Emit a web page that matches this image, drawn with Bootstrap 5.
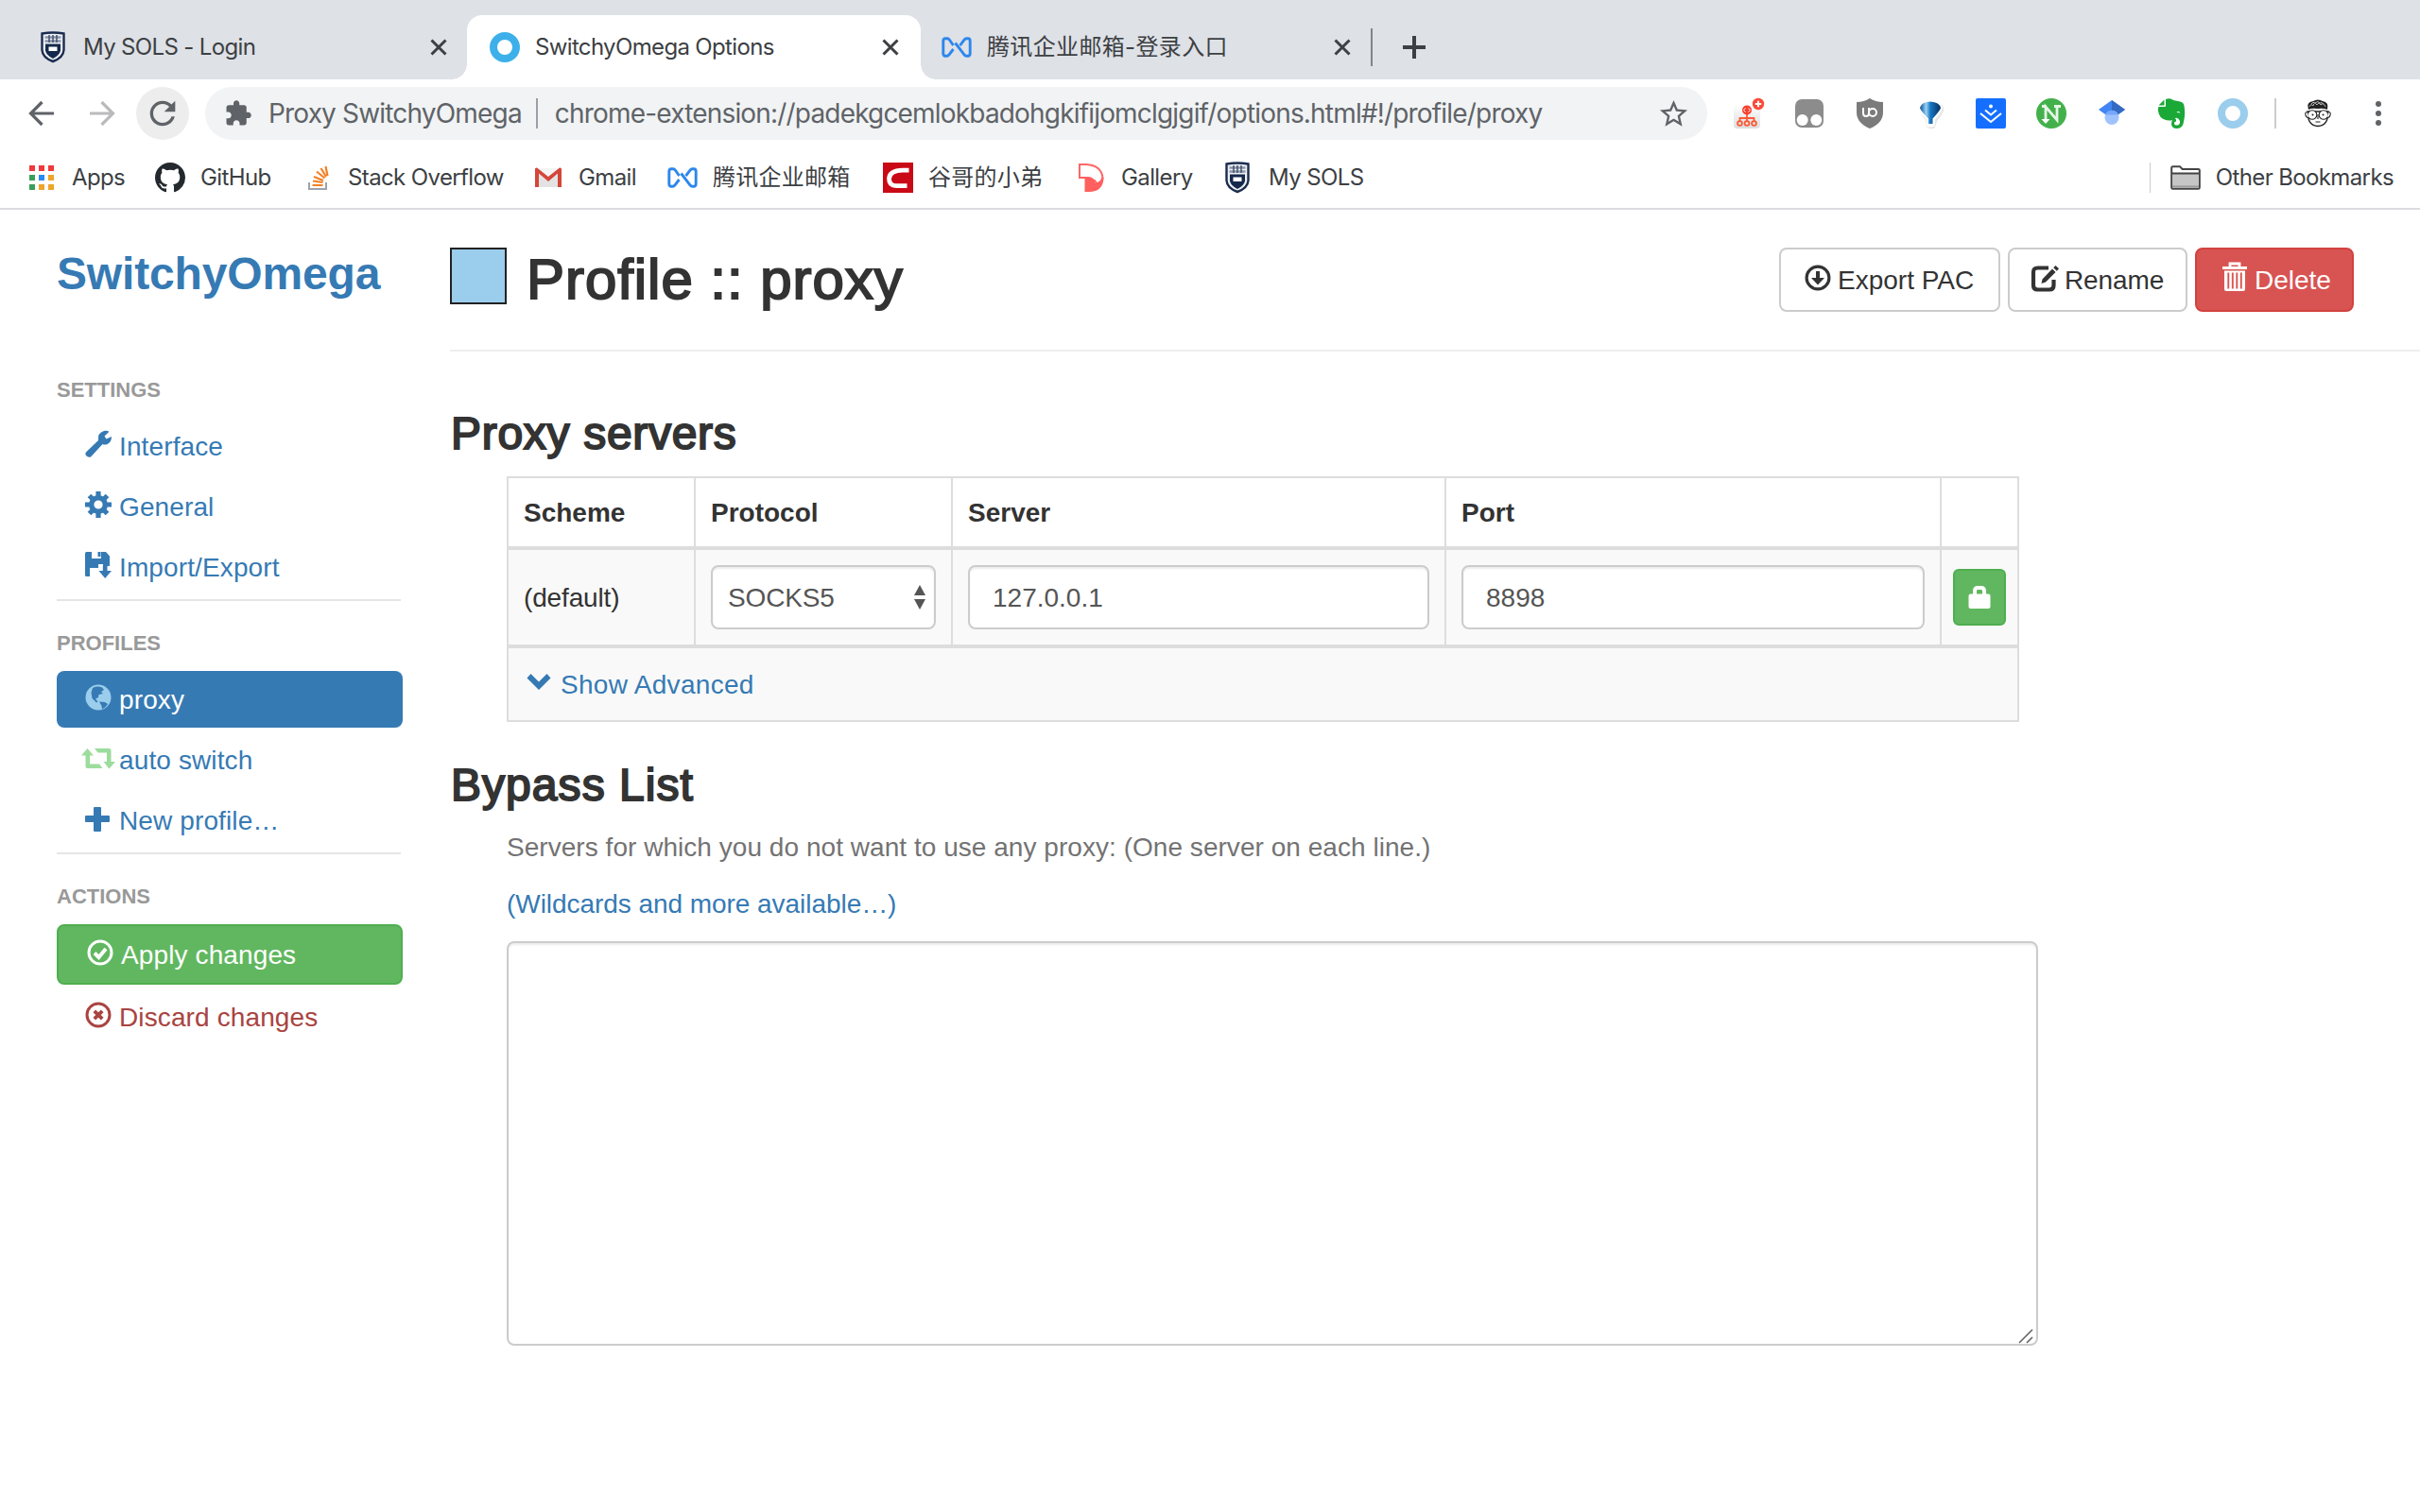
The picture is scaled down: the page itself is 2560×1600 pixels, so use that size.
<!DOCTYPE html>
<html lang="en">
<head>
<meta charset="utf-8">
<title>SwitchyOmega Options</title>
<link href="https://cdn.jsdelivr.net/npm/bootstrap@5.3.0/dist/css/bootstrap.min.css" rel="stylesheet">
<style>
:root{--link:#367ab4;--ui:Inter,"Noto Sans CJK SC",sans-serif}
html,body{overflow:hidden}
body{font-family:"Liberation Sans",Arial,sans-serif;font-size:28px;line-height:40px;color:#333;background:#fff;width:2560px;height:1600px}
svg{display:block;flex:none;overflow:visible}
a{text-decoration:none}

/* browser chrome */
.chrome-ui{font-family:var(--ui);color:#3c4043;height:222px;border-bottom:2px solid #dadce0}
.tabstrip{height:84px;background:#dee1e6;padding:16px 0 0 16px}
.btab{width:478px;height:68px;padding:0 21px 0 24px;font-size:24px;position:relative;letter-spacing:-.65px}
.btab .fav{width:32px;margin-right:16px}
.btab.current{width:480px;margin-right:-2px;padding-right:23px;background:#fff;border-radius:16px 16px 0 0}
.btab.current::before,.btab.current::after{content:"";position:absolute;bottom:0;width:16px;height:16px}
.btab.current::before{left:-16px;background:radial-gradient(circle at 0 0,transparent 15.5px,#fff 16px)}
.btab.current::after{right:-16px;background:radial-gradient(circle at 100% 0,transparent 15.5px,#fff 16px)}
.tabend{height:68px}
.tabsep{width:2px;height:40px;background:#80868b}
.plus{margin-left:32px}
.toolbar{height:72px;padding-left:24px}
.reload{width:56px;height:56px;border-radius:50%;background:#ededee;margin-left:16px}
.omnibox{width:1589px;height:56px;border-radius:28px;background:#f1f3f4;margin-left:17px;padding:0 18px 0 20px;font-size:28px;color:#5f6368;letter-spacing:-.82px}
.omnibox .bar{width:2px;height:32px;background:#9aa0a6;margin:0 18px 0 15px}
.omnibox .extname{margin-left:17px}
.exts{margin-left:28px;gap:32px;margin-right:28px}
.vline{width:2px;height:32px;background:#ccc}
.face{margin-left:28px}
.dots{margin-left:45px}
.bookmarks{height:64px;font-size:24px;padding-left:28px;letter-spacing:-.62px}
.btab .cjk{letter-spacing:.35px}
.cjk{letter-spacing:.25px}
.bm{gap:16px;height:32px;flex:none}
.bm .ic{width:32px}
.bookmarks .bm:nth-child(1){width:136px}
.bookmarks .bm:nth-child(2){width:156px}
.bookmarks .bm:nth-child(3){width:244px}
.bookmarks .bm:nth-child(4){width:142px}
.bookmarks .bm:nth-child(5){width:228px}
.bookmarks .bm:nth-child(6){width:204px}
.bookmarks .bm:nth-child(7){width:156px}
.bookmarks .bm:nth-child(8) svg{margin-left:2px}
.others{padding-right:28px}
.others .vline{width:1px;margin-right:21px}

/* options page */
.side{width:476px;padding:38px 50px 0 60px}
.logo{font-size:48px;line-height:60px;font-weight:700;color:var(--link);margin-bottom:77px;letter-spacing:-.15px}
.sect{font-size:22px;line-height:31px;font-weight:700;color:#999;margin-bottom:14px}
a.item{height:60px;line-height:61px;margin-bottom:4px;padding-left:30px;border-radius:8px;color:var(--link);gap:8px;letter-spacing:.12px}
.item svg{margin-top:14px}
a.item.on{background:var(--link);color:#fff}
a.item.apply{height:64px;background:#61b760;border:2px solid #4fae50;color:#fff}
a.item.discard{color:#a94442}
.line{height:2px;width:364px;background:#e5e5e5;margin-bottom:29px}
.head{height:150px;border-bottom:2px solid #eee;padding:40px 70px 0 0}
.swatch{width:60px;height:60px;border:2px solid #222;background:#9bcdec}
.med{-webkit-text-stroke:2px #333;font-weight:400;color:#333;margin:0}
.title{font-size:60px;line-height:70px;letter-spacing:.95px;margin-left:21px;margin-top:-1px}
.sub{font-size:48px;line-height:60px;letter-spacing:.7px;padding-left:1px}
.sub.first{margin-top:57px}
.sub.second{letter-spacing:1.05px}
.abtn{height:68px;border:2px solid #ccc;border-radius:8px;font-size:28px;line-height:65px;padding:0;color:#333;background:#fff;gap:7px;display:flex}
.abtn.exp{width:234px;padding-left:25px}
.abtn.ren{width:190px;padding-left:23px;letter-spacing:-.1px}
.abtn.del{width:168px;padding-left:26px;background:#d85452;border-color:#d2423f;color:#fff}
.abtn svg{margin-top:16px}
.abtn.ren svg{margin-top:17px}
.abtn.del svg{margin-top:13px}
.grid-wrap{width:1600px;margin:15px 0 37px 60px}
.proxies{table-layout:fixed;border-collapse:separate;border-spacing:0;width:1600px;--bs-table-bg:transparent;color:#333;margin:0}
.proxies .c1{width:198px}.proxies .c2{width:272px}.proxies .c3{width:522px}.proxies .c4{width:524px}.proxies .c5{width:84px}
.proxies>:not(caption)>*>*{border:0 solid #ddd;border-left-width:2px;border-top-width:2px;padding:0 16px;vertical-align:middle;box-shadow:none;color:#333;background:none}
.proxies>:not(caption)>*>*:last-child{border-right-width:2px}
.proxies>thead>tr>th{height:74px;font-weight:700;padding:2px 0 0 16px}
.proxies>tbody>tr>td{height:104px;border-top-width:4px;background:#f9f9f9}
.proxies>tbody>tr>td:first-child{padding:1px 0 0 16px;letter-spacing:-.15px}
.proxies>tfoot>tr>td{height:82px;border-top-width:4px;border-bottom-width:2px;background:#f9f9f9}
.proxies>tbody>tr>td:last-child{padding:0 12px}
.fld{height:68px;border:2px solid #ccc;border-radius:8px;font-size:28px;line-height:40px;color:#555;background:#fff;box-shadow:inset 0 2px 2px rgba(0,0,0,.075);padding:1px 24px 0}
select.fld{padding:1px 16px 0 16px;background-image:none;letter-spacing:-.15px}
.lock{width:56px;height:60px;border:2px solid #4fae50;background:#61b760;border-radius:6px;padding:12px 14px}
.carets{position:absolute;right:11px;top:21px}
a.adv{gap:10px;color:var(--link);letter-spacing:.3px;padding-top:1px}
.adv svg{margin:-7px 1px 0 4px}
.bypass{margin-left:60px;width:1620px}
.help{color:#737373;margin:16px 0 20px;letter-spacing:.04px}
.more{margin-bottom:19px}
a.more-link{color:var(--link);letter-spacing:-.05px}
textarea.fld{height:428px;resize:none}
.grip{position:absolute;right:5px;bottom:2px}
</style>
</head>
<body>
<header class="chrome-ui">
  <div class="tabstrip d-flex">
    <div class="btab d-flex align-items-center">
      <span class="fav d-flex"><svg width="30" height="32" viewBox="-3 0 30 32"><path d="M1.500 1.500Q13-.5 24.500 1.500V19Q24 27 13 31Q2 27 1.500 19Z" fill="#eef0f4" stroke="#1b2c4f" stroke-width="2.400"/><path d="M4.500 5.500h17M4.500 9.500h17" stroke="#8c97ab" stroke-width="2.400"/><path d="M9 3v8M13 3v8M17 3v8" stroke="#44516d" stroke-width="1.500"/><path d="M5 12.500h16v7q-1 5-8 8.500q-7-3.500-8-8.500z" fill="#14284b"/><path d="M8.500 15.500h9v4.500h-9z" fill="#fff"/></svg></span>
      <span>My SOLS - Login</span>
      <svg class="ms-auto" width="18" height="18" viewBox="0 0 18 18"><path d="M1.500 1.500l15 15M16.500 1.500l-15 15" stroke="#3c4043" stroke-width="3"/></svg>
    </div>
    <div class="btab current d-flex align-items-center">
      <span class="fav"><svg width="32" height="32"><circle cx="16" cy="16" r="12" fill="none" stroke="#3db0ea" stroke-width="8"/></svg></span>
      <span>SwitchyOmega Options</span>
      <svg class="ms-auto" width="18" height="18" viewBox="0 0 18 18"><path d="M1.500 1.500l15 15M16.500 1.500l-15 15" stroke="#3c4043" stroke-width="3"/></svg>
    </div>
    <div class="btab d-flex align-items-center">
      <span class="fav"><svg width="32" height="22" viewBox="0 0 32 22"><path d="M12.500 9L8.500 3.200Q7.500 1.800 6 1.800H4Q1.800 1.800 1.800 4.500V17.500Q1.800 20.200 4 20.200H5.500Q7 20.200 8 18.800L12.500 13M14.500 6.500L24 18.800Q25 20.200 26.500 20.200H28Q30.200 20.200 30.200 17.500V4.500Q30.200 1.800 28 1.800H26.500Q25 1.800 24 3.200L19.500 9.200" fill="none" stroke="#2d87ec" stroke-width="2.900"/></svg></span>
      <span class="cjk">腾讯企业邮箱-登录入口</span>
      <svg class="ms-auto" width="18" height="18" viewBox="0 0 18 18"><path d="M1.500 1.500l15 15M16.500 1.500l-15 15" stroke="#3c4043" stroke-width="3"/></svg>
    </div>
    <div class="tabend d-flex align-items-center"><span class="tabsep"></span>
      <svg class="plus" width="24" height="24"><path d="M12 0v24M0 12h24" stroke="#3c4043" stroke-width="4"/></svg></div>
  </div>
  <nav class="toolbar d-flex align-items-center">
    <svg width="40" height="40" viewBox="0 0 40 40"><path d="M33 20H9M20.500 8L8.500 20l12 12" fill="none" stroke="#5f6368" stroke-width="3.200"/></svg>
    <svg class="ms-4" width="40" height="40" viewBox="0 0 40 40"><path d="M7 20H31M19.500 8l12 12l-12 12" fill="none" stroke="#bababc" stroke-width="3.200"/></svg>
    <span class="reload d-flex align-items-center justify-content-center"><svg width="40" height="40" viewBox="0 0 24 24"><path fill="#5f6368" d="M17.650 6.350C16.200 4.900 14.210 4 12 4c-4.420 0-7.990 3.580-7.990 8s3.570 8 7.990 8c3.730 0 6.840-2.550 7.730-6h-2.080c-.82 2.330-3.040 4-5.650 4-3.310 0-6-2.690-6-6s2.690-6 6-6c1.660 0 3.140.69 4.220 1.780L13 11h7V4l-2.350 2.350z"/></svg></span>
    <div class="omnibox d-flex align-items-center">
      <svg width="30" height="30" viewBox="0 0 24 24"><path fill="#5f6368" d="M20.500 11H19V7c0-1.100-.9-2-2-2h-4V3.500C13 2.120 11.880 1 10.500 1S8 2.120 8 3.500V5H4c-1.100 0-1.990.9-1.990 2v3.800H3.500c1.490 0 2.700 1.210 2.700 2.700s-1.210 2.700-2.700 2.700H2V20c0 1.100.9 2 2 2h3.800v-1.500c0-1.490 1.210-2.700 2.700-2.700 1.490 0 2.700 1.210 2.700 2.700V22H17c1.100 0 2-.9 2-2v-4h1.500c1.380 0 2.500-1.120 2.500-2.500S21.880 11 20.500 11z"/></svg>
      <span class="extname">Proxy SwitchyOmega</span><span class="bar"></span><span>chrome-extension://padekgcemlokbadohgkifijomclgjgif/options.html#!/profile/proxy</span>
      <svg class="ms-auto" width="35" height="35" viewBox="0 0 24 24"><path fill="#5f6368" d="M22 9.240l-7.190-.62L12 2 9.190 8.630 2 9.240l5.460 4.730L5.820 21 12 17.270 18.180 21l-1.630-7.030L22 9.240zM12 15.400l-3.760 2.270 1-4.280-3.320-2.880 4.380-.38L12 6.100l1.710 4.040 4.380.38-3.320 2.880 1 4.280L12 15.400z"/></svg>
    </div>
    <div class="exts d-flex align-items-center">
      <svg width="32" height="32" viewBox="0 0 32 32"><defs><linearGradient id="gr" x2="0" y2="1"><stop stop-color="#fff"/><stop offset="1" stop-color="#ddd"/></linearGradient></defs><rect y="6" width="28" height="26" rx="4" fill="url(#gr)"/><g fill="none" stroke="#fb5a35" stroke-width="1.800"><path d="M14 16v8M6.500 25v-4h15v4"/><circle cx="6.500" cy="26.500" r="2.400"/><circle cx="14" cy="26.500" r="2.400"/><circle cx="21.500" cy="26.500" r="2.400"/></g><circle cx="14" cy="12.500" r="5" fill="#f9412f"/><path d="M12.500 10.500l-2 2 2 2M15.500 10.500l2 2-2 2" fill="none" stroke="#fff"/><circle cx="26" cy="6" r="6.200" fill="#fb4a38"/><path d="M26 2.800v6.400M22.800 6h6.400" stroke="#fff" stroke-width="2"/></svg>
      <svg width="32" height="32" viewBox="0 0 32 32"><rect x="1" y="1" width="30" height="30" rx="7" fill="#8c8c8c"/><circle cx="8.700" cy="23" r="6" fill="#fff"/><circle cx="23.300" cy="23" r="6" fill="#fff"/></svg>
      <svg width="32" height="32" viewBox="0 0 32 32"><path d="M16 0Q22 4 30 4V15Q30 26 16 32Q2 26 2 15V4Q10 4 16 0Z" fill="#7b7b7b"/><path d="M9 10v6q0 3 3 3t3-3v-6" fill="none" stroke="#fff" stroke-width="2"/><circle cx="19" cy="15" r="4" fill="none" stroke="#fff" stroke-width="2"/></svg>
      <svg width="32" height="32" viewBox="0 0 32 32"><defs><linearGradient id="bl"><stop stop-color="#0a4f94"/><stop offset=".3" stop-color="#9bd3f3"/><stop offset=".5" stop-color="#1877c4"/><stop offset="1" stop-color="#052f60"/></linearGradient></defs><path d="M5 12Q3 4 17 3Q32 5 30 13Q29 17 23 24L21 31Q17 34 12 30L11 23Q5 17 5 12Z" fill="#e6e6e6"/><path d="M3.500 11.500Q3 2.500 16 2Q29 2.500 28.500 11.500Q27 16 21 22.500V29Q16.500 32 12 29V22.500Q5 16 3.500 11.500Z" fill="#fff"/><path d="M5 10.500Q6 4 16 3.500Q26 4 27 10.500Q25 14.500 18.500 21.500V27H14V21.500Q7 14.500 5 10.500Z" fill="url(#bl)"/></svg>
      <svg width="32" height="32" viewBox="0 0 32 32"><rect width="32" height="32" rx="2" fill="#146fff"/><path d="M5 16l11 9l11-9M10 12.500l6 5l6-5" fill="none" stroke="#fff" stroke-width="2"/><circle cx="16" cy="8.500" r="2" fill="#fff"/></svg>
      <svg width="32" height="32" viewBox="0 0 32 32"><circle cx="16" cy="16" r="16" fill="#43b14b"/><path d="M10 24V9L22 23V8M6 8.500h5M19 8.500h7" fill="none" stroke="#e6f5e6" stroke-width="2.800"/><path d="M5.500 22h9L10 27z" fill="#fff"/></svg>
      <svg width="32" height="32" viewBox="0 0 32 32"><path d="M16 2L30 12L16 22L2 12Z" fill="#4285f4"/><path d="M16 2L30 12L16 22Z" fill="#356ac3"/><circle cx="16" cy="20.500" r="7.500" fill="#a0c3ff"/><path d="M9 17.500a7.500 7.500 0 0 1 14 0z" fill="#76a7fa"/></svg>
      <svg width="32" height="32" viewBox="0 0 32 32"><path d="M9 1Q14-1 17 2L24 3.500Q28 4 28.500 8Q30 17 28 25Q27 32 21 32Q15 32 15 27Q15 22 20 22V24.500Q18 24.500 18 26.500Q18 28.500 21 28.500Q24.500 28 24 24Q23 21 20 20.500Q18 24 13 23.500Q4 23 2 17Q0 12 1.500 9H8Q9 9 9 8Z" fill="#1aa837"/><path d="M1.500 7.500L7.500 1.500V7.500Z" fill="#1aa837"/><path d="M20.500 15q2-2 4 .5z" fill="#fff"/></svg>
      <svg width="32" height="32"><circle cx="16" cy="16" r="12" fill="none" stroke="#9bcdec" stroke-width="8"/></svg>
    </div>
    <span class="vline"></span>
    <svg class="face" width="32" height="32" viewBox="0 0 32 32"><path d="M5 14q0 15 11 15.500q11-.5 11-15.500z" fill="#fff" stroke="#222" stroke-width="1.300"/><path d="M6 12Q3 4 11 3Q16 0 21 3Q28 4 26 12Q22 10 16 11Q9 10 6 12Z" fill="#222"/><path d="M7 9q2-4 4-1q1-5 4-1q2-4 4 0q3-3 5 2M9 6q2-3 4-1q3-3 5 0q2-1 4 1" fill="none" stroke="#bbb"/><g fill="#fff" stroke="#222" stroke-width="1.100"><circle cx="10" cy="17.500" r="4.800"/><circle cx="22" cy="17.500" r="4.800"/><path d="M5 15q-3-1-2 3q1 3 3 2M27 15q3-1 2 3q-1 3-3 2M16 17v5M13.500 25h5"/></g><circle cx="10.500" cy="17.500" r="1" fill="#222"/><circle cx="21.500" cy="17.500" r="1" fill="#222"/></svg>
    <svg class="dots" width="6" height="26" viewBox="0 0 6 26"><g fill="#5f6368"><circle cx="3" cy="3" r="3"/><circle cx="3" cy="13" r="3"/><circle cx="3" cy="23" r="3"/></g></svg>
  </nav>
  <nav class="bookmarks d-flex align-items-center">
    <div class="bm d-flex align-items-center"><span class="ic"><svg width="32" height="26"><g fill="#f0393c"><path d="M3 0h6v6H3zM13 0h6v6h-6zM23 0h6v6h-6z"/></g><path d="M3 10h6v6H3zM3 20h6v6H3z" fill="#3a9e5b"/><path d="M13 10h6v6h-6z" fill="#2a8af5"/><path d="M13 20h6v6h-6z" fill="#eea52a"/><path d="M23 10h6v6h-6zM23 20h6v6h-6z" fill="#eea52a"/></svg></span><span>Apps</span></div>
    <div class="bm d-flex align-items-center"><span class="ic"><svg width="32" height="32" viewBox="0 0 16 16"><path fill="#24292e" d="M8 0C3.580 0 0 3.580 0 8c0 3.540 2.290 6.530 5.470 7.590.4.07.55-.17.55-.38 0-.19-.01-.82-.01-1.490-2.010.37-2.530-.49-2.690-.94-.09-.23-.48-.94-.82-1.130-.28-.15-.68-.52-.01-.53.63-.01 1.080.58 1.230.82.72 1.210 1.870.87 2.330.66.07-.52.28-.87.51-1.070-1.780-.2-3.640-.89-3.640-3.950 0-.87.31-1.590.82-2.150-.08-.2-.36-1.020.08-2.120 0 0 .67-.21 2.200.82.64-.18 1.320-.27 2-.27s1.360.09 2 .27c1.530-1.040 2.200-.82 2.200-.82.44 1.100.16 1.920.08 2.120.51.56.82 1.270.82 2.150 0 3.070-1.870 3.750-3.650 3.950.29.25.54.73.54 1.480 0 1.070-.01 1.930-.01 2.200 0 .21.15.46.55.38A8.010 8.010 0 0 0 16 8c0-4.420-3.580-8-8-8z"/></svg></span><span>GitHub</span></div>
    <div class="bm d-flex align-items-center"><span class="ic"><svg width="32" height="32" viewBox="0 0 32 32"><path d="M7 21v7h18v-7" fill="none" stroke="#9da3a9" stroke-width="2"/><path d="M10.500 24h11M11 19.500l10.500 1.500M12 15l10 4M15 9.500l8.500 7M19.500 6l5.500 9M24.500 4l2 10" stroke="#f48024" stroke-width="2.200"/></svg></span><span>Stack Overflow</span></div>
    <div class="bm d-flex align-items-center"><span class="ic"><svg width="32" height="22" viewBox="0 0 32 22"><path d="M3 1h26v20H3z" fill="#e3e3e3"/><path d="M4 1l12 9.500L28 1z" fill="#f4f4f4"/><path d="M2 21V2Q2 0 4 .5L16 10L28 .5Q30 0 30 2V21H26V6.500L16 15L6 6.500V21Z" fill="#d5453a"/></svg></span><span>Gmail</span></div>
    <div class="bm d-flex align-items-center"><span class="ic"><svg width="32" height="22" viewBox="0 0 32 22"><path d="M12.500 9L8.500 3.200Q7.500 1.800 6 1.800H4Q1.800 1.800 1.800 4.500V17.500Q1.800 20.200 4 20.200H5.500Q7 20.200 8 18.800L12.500 13M14.500 6.500L24 18.800Q25 20.200 26.500 20.200H28Q30.200 20.200 30.200 17.500V4.500Q30.200 1.800 28 1.800H26.500Q25 1.800 24 3.200L19.500 9.200" fill="none" stroke="#2d87ec" stroke-width="2.900"/></svg></span><span class="cjk">腾讯企业邮箱</span></div>
    <div class="bm d-flex align-items-center"><span class="ic"><svg width="32" height="32" viewBox="0 0 32 32"><rect width="32" height="32" fill="#c90915"/><path d="M27.500 8.200H21Q7 8.500 6.500 17Q6.500 24.500 14 24.700H25.500" fill="none" stroke="#fff" stroke-width="4.800"/></svg></span><span class="cjk">谷哥的小弟</span></div>
    <div class="bm d-flex align-items-center"><span class="ic"><svg width="32" height="32" viewBox="0 0 32 32"><path d="M4 2H11Q27 3 28.500 16Q28 22 24 24L20 19L11 16H4Z" fill="#fff" stroke="#ff6767" stroke-width="2"/><path d="M3 15H13Q20 15.500 20.500 21.500Q26 21 27.500 15.500L29.500 16Q29 31 14 31H9.500V17H3Z" fill="#ff5f5f"/></svg></span><span>Gallery</span></div>
    <div class="bm d-flex align-items-center"><span class="ic"><svg width="26" height="32" viewBox="0 0 26 32"><path d="M1.500 1.500Q13-.5 24.500 1.500V19Q24 27 13 31Q2 27 1.500 19Z" fill="#eef0f4" stroke="#1b2c4f" stroke-width="2.400"/><path d="M4.500 5.500h17M4.500 9.500h17" stroke="#8c97ab" stroke-width="2.400"/><path d="M9 3v8M13 3v8M17 3v8" stroke="#44516d" stroke-width="1.500"/><path d="M5 12.500h16v7q-1 5-8 8.500q-7-3.500-8-8.500z" fill="#14284b"/><path d="M8.500 15.500h9v4.500h-9z" fill="#fff"/></svg></span><span>My SOLS</span></div>
    <div class="others ms-auto d-flex align-items-center"><span class="vline"></span>
      <svg width="32" height="26" viewBox="0 0 32 26"><path d="M1.200 2.500Q1.200 1.200 2.500 1.200H10L12.500 4H29.500Q30.800 4 30.800 5V23.500Q30.800 24.800 29.500 24.800H2.500Q1.200 24.800 1.200 23.500Z" fill="#fff" stroke="#444" stroke-width="2"/><path d="M2 9H30V24H2Z" fill="#c6c6c6"/><path d="M1 8.500H31" stroke="#444" stroke-width="2"/><path d="M2 22.500H30" stroke="#999" stroke-width="2"/></svg>
      <span class="ms-3">Other Bookmarks</span></div>
  </nav>
</header>

<main class="d-flex">
  <aside class="side flex-shrink-0">
    <div class="logo">SwitchyOmega</div>
    <div class="sect">SETTINGS</div>
    <a class="item d-flex"><svg width="28" height="28" viewBox="0 0 28 28"><path d="M20 0Q23-.5 25.500 .8L20.500 5.500L22.500 8.500L28 6Q28 12 23.500 14Q21 15 18.500 14L6 27.500Q3 28.500 1 26Q-.5 24 1 22.500L14 10Q13 2 20 0Z" fill="currentColor"/></svg><span>Interface</span></a>
    <a class="item d-flex"><svg width="28" height="28" viewBox="-14 -14 28 28"><g stroke="currentColor" stroke-width="5.200"><path d="M0-14V14M-14 0H14M-9.500-9.500L9.500 9.500M9.500-9.500L-9.500 9.500"/></g><circle r="7.300" fill="#fff" stroke="currentColor" stroke-width="5.400"/></svg><span>General</span></a>
    <a class="item d-flex"><svg width="28" height="28" viewBox="0 0 28 28"><path d="M1.500 0H7V7H17V0H22L26 4.500V15H19V13H14V17H5V26H1.500Q0 26 0 24.500V1.500Q0 0 1.500 0ZM13.500 0H16.500V5H13.500Z" fill="currentColor"/><path d="M18.800 15H23.500V20H28L21.200 28L14.500 20H18.800Z" fill="currentColor"/></svg><span>Import/Export</span></a>
    <div class="line"></div>
    <div class="sect">PROFILES</div>
    <a class="item on d-flex"><svg width="28" height="28" viewBox="0 0 28 28"><circle cx="14" cy="14" r="13.500" fill="#9bcdec"/><path d="M8 4Q13 1.500 18 3.500L20 6L17 8L19 10L14.500 11L14 14L11 15.500L13.500 18.500L12 19.500L7.500 15L6.500 9ZM15 18.500L21 19L24 21Q22 25 18 26.500L17.500 23Z" fill="#367ab4"/></svg><span>proxy</span></a>
    <a class="item d-flex"><svg width="28" height="28" viewBox="0 0 28 28"><path d="M-4 11.500L2.500 4L9 11.500H5V20.500H15L18.500 25H2.500Q.500 25 .5 23V11.500ZM10 4H25Q27.500 4 27.500 6V18H32L25.500 25.500L19.500 18H23V8.500H13.500Z" fill="#9cdc9c"/></svg><span>auto switch</span></a>
    <a class="item d-flex"><svg width="28" height="28" viewBox="0 0 28 28"><path d="M10 2H16Q17 2 17 3V11H25Q26 11 26 12V17Q26 18 25 18H17V27Q17 28 16 28H10Q9 28 9 27V18H1Q0 18 0 17V12Q0 11 1 11H9V3Q9 2 10 2Z" fill="currentColor"/></svg><span>New profile…</span></a>
    <div class="line"></div>
    <div class="sect">ACTIONS</div>
    <a class="item apply d-flex"><svg width="28" height="28" viewBox="0 0 28 28"><circle cx="14" cy="14" r="12" fill="none" stroke="currentColor" stroke-width="3"/><path d="M8 14.500L12.500 19L20 10" fill="none" stroke="currentColor" stroke-width="4"/></svg><span>Apply changes</span></a>
    <a class="item discard d-flex"><svg width="28" height="28" viewBox="0 0 28 28"><circle cx="14" cy="14" r="12" fill="none" stroke="currentColor" stroke-width="3"/><path d="M9.800 9.800l8.400 8.400M18.200 9.800l-8.400 8.400" fill="none" stroke="currentColor" stroke-width="3.800"/></svg><span>Discard changes</span></a>
  </aside>

  <section class="flex-grow-1">
    <div class="head d-flex align-items-start">
      <span class="swatch"></span>
      <h1 class="med title">Profile :: proxy</h1>
      <div class="ms-auto d-flex gap-2">
        <button class="abtn exp"><svg width="28" height="28" viewBox="0 0 28 28"><circle cx="14" cy="14" r="11.900" fill="none" stroke="currentColor" stroke-width="3.200"/><path d="M12 7h4v7h5l-7 7.500L7 14h5z" fill="currentColor"/></svg><span>Export PAC</span></button>
        <button class="abtn ren"><svg width="28" height="28" viewBox="0 0 28 28"><path d="M18 2.500H6.500Q2 2.500 2 7V21Q2 25.500 6.500 25.500H19Q23.500 25.500 23.500 21V15" fill="none" stroke="currentColor" stroke-width="4.200"/><path d="M22 3.500L25.500 7L15 17.500L10.500 19L11.500 14.500ZM23.200 2.200L25.500 0L29 3.300L26.800 5.700Z" fill="currentColor"/></svg><span>Rename</span></button>
        <button class="abtn del"><svg width="28" height="32" viewBox="0 0 28 32"><path d="M1 6.500H27M9 5.500V2H19V5.500" fill="none" stroke="currentColor" stroke-width="2.800"/><path d="M3 9.500H25V29Q25 31 23 31H5Q3 31 3 29Z" fill="currentColor"/><path d="M7.300 11.500V28.500M11.800 11.500V28.500M16.300 11.500V28.500M20.800 11.500V28.500" stroke="#d85452" stroke-width="1.900"/></svg><span>Delete</span></button>
      </div>
    </div>

    <h3 class="med sub first">Proxy servers</h3>
    <div class="grid-wrap">
      <table class="table proxies">
        <colgroup><col class="c1"><col class="c2"><col class="c3"><col class="c4"><col class="c5"></colgroup>
        <thead><tr><th>Scheme</th><th>Protocol</th><th>Server</th><th>Port</th><th></th></tr></thead>
        <tbody><tr>
          <td>(default)</td>
          <td><div class="position-relative"><select class="form-select fld"><option>SOCKS5</option></select>
            <svg class="carets" width="12" height="26" viewBox="0 0 12 26"><path d="M0 11L6 0L12 11ZM0 15H12L6 26Z" fill="#555"/></svg></div></td>
          <td><input class="form-control fld" value="127.0.0.1"></td>
          <td><input class="form-control fld" value="8898"></td>
          <td><button class="lock d-block"><svg width="24" height="24" viewBox="0 0 24 24"><path d="M7 9V5.500Q7 2 10 2H14Q17 2 17 5.500V9" fill="none" stroke="#fff" stroke-width="4"/><rect x=".5" y="8.500" width="23" height="15.500" rx="2" fill="#fff"/></svg></button></td>
        </tr></tbody>
        <tfoot><tr><td colspan="5"><a class="adv d-flex align-items-center"><svg width="24" height="17" viewBox="0 0 24 17"><path d="M3.500 0L12 8.500L20.500 0L24.500 4.500L12 17L-.5 4.500Z" fill="currentColor"/></svg><span>Show Advanced</span></a></td></tr></tfoot>
      </table>
    </div>
    <h3 class="med sub second">Bypass List</h3>
    <div class="bypass">
      <p class="help">Servers for which you do not want to use any proxy: (One server on each line.)</p>
      <p class="more"><a class="more-link" href="#">(Wildcards and more available…)</a></p>
      <div class="position-relative"><textarea class="form-control fld"></textarea>
        <svg class="grip" width="16" height="16" viewBox="0 0 16 16"><path d="M1 15L15 1M9 15L15 9" stroke="#666" stroke-width="1.600"/></svg></div>
    </div>
  </section>
</main>
<script src="https://cdn.jsdelivr.net/npm/bootstrap@5.3.0/dist/js/bootstrap.bundle.min.js"></script>
</body>
</html>
